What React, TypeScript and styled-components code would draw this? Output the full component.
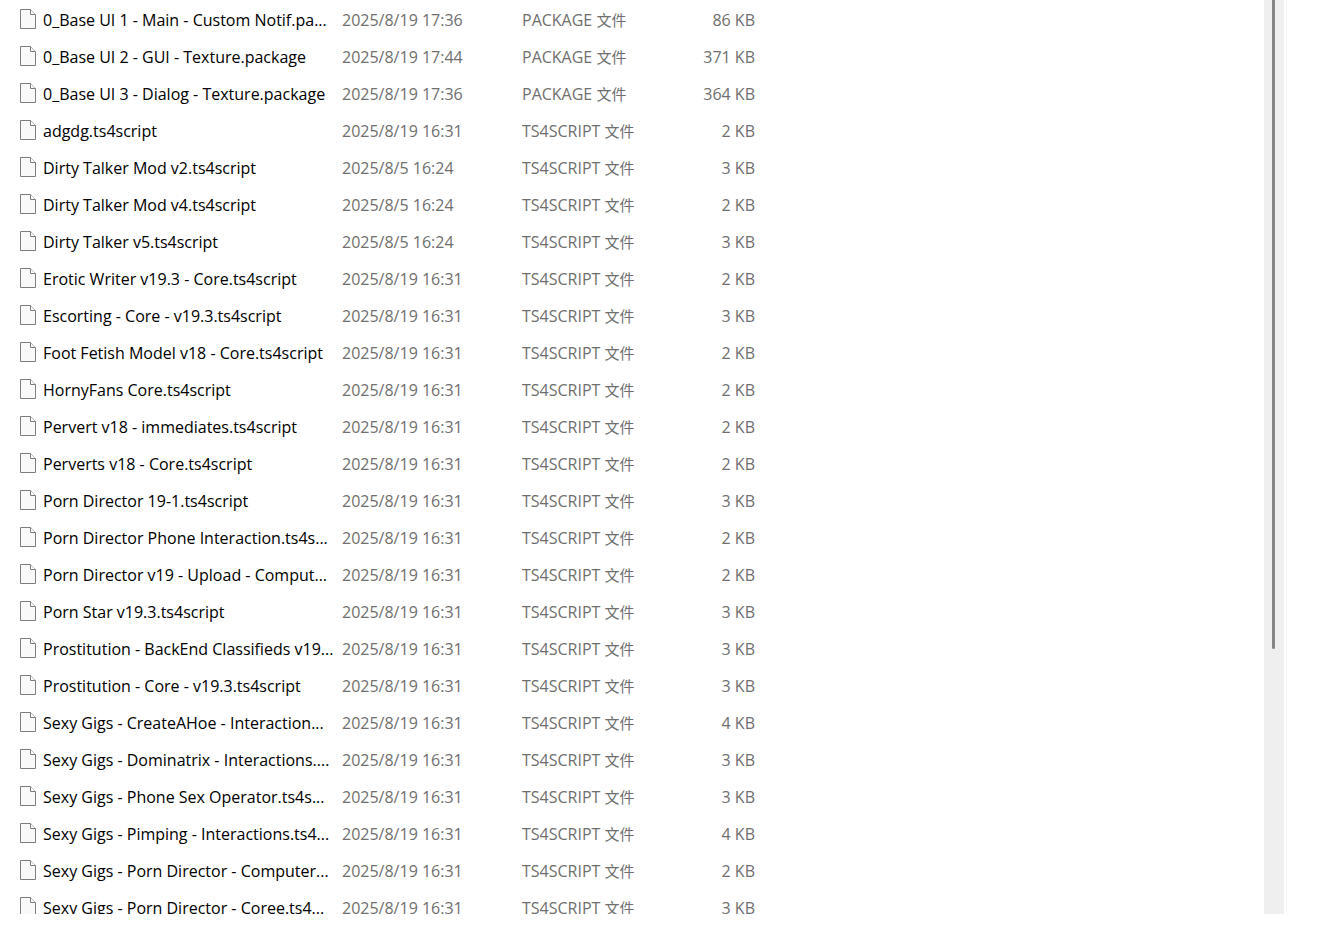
import React from "react";
import styled, { createGlobalStyle } from "styled-components";

const GlobalStyle = createGlobalStyle`
  * { box-sizing: border-box; }
  body {
    margin: 0;
    background: #fff;
    font-family: "Open Sans", "Noto Sans CJK SC", sans-serif;
    font-size: 16px;
    line-height: 20px;
  }
`;

const Pane = styled.main`
  display: flex;
  height: calc(100vh - 21px);
  padding-right: 53px;
  overflow: hidden;
`;

const ListArea = styled.div`
  flex: 1;
  min-width: 0;
  padding: 1px 0 0 20px;
  overflow: hidden;
`;

const FileTable = styled.table`
  table-layout: fixed;
  width: 735px;
  border-collapse: collapse;
`;

const Column = styled.col<{ $width: number }>`
  width: ${(p) => p.$width}px;
`;

const Row = styled.tr`
  height: 37px;
`;

const Cell = styled.td<{ $align?: "left" | "right" }>`
  padding: 0;
  color: #6f6f6f;
  text-align: ${(p) => p.$align ?? "left"};
  white-space: nowrap;
`;

const NameCell = styled(Cell)`
  color: #000;
`;

const KindSuffix = styled.span`
  font-size: 15px;
`;

const FileLabel = styled.div`
  display: flex;
  align-items: center;
  gap: 7px;
`;

const Icon = styled.svg`
  flex: none;
  width: 16px;
  height: 20px;
  margin-bottom: 2px;
`;

const Scrollbar = styled.div`
  display: flex;
  justify-content: center;
  width: 23px;
  padding-right: 1px;
  border-right: 1px solid #f5f5f5;
  background: linear-gradient(#efefef, #efefef) left / 20px 100% no-repeat;
`;

const Thumb = styled.div`
  width: 3px;
  height: 71%;
  margin-right: 2px;
  border-radius: 0 0 2px 2px;
  background: #858585;
`;

const FileIcon = () => (
  <Icon viewBox="0 0 16 20" aria-hidden="true">
    <path d="M.5.5h10l5 5v14H.5z" fill="#f9f9f9" stroke="#7d7d7d" />
    <path d="M10.5.5v5h5" fill="#fff" stroke="#7d7d7d" />
  </Icon>
);

type FileEntry = [name: string, modified: string, kind: string, size: number];

const files: FileEntry[] = [
  ["0_Base UI 1 - Main - Custom Notif.pa...", "2025/8/19 17:36", "PACKAGE", 86],
  ["0_Base UI 2 - GUI - Texture.package", "2025/8/19 17:44", "PACKAGE", 371],
  ["0_Base UI 3 - Dialog - Texture.package", "2025/8/19 17:36", "PACKAGE", 364],
  ["adgdg.ts4script", "2025/8/19 16:31", "TS4SCRIPT", 2],
  ["Dirty Talker Mod v2.ts4script", "2025/8/5 16:24", "TS4SCRIPT", 3],
  ["Dirty Talker Mod v4.ts4script", "2025/8/5 16:24", "TS4SCRIPT", 2],
  ["Dirty Talker v5.ts4script", "2025/8/5 16:24", "TS4SCRIPT", 3],
  ["Erotic Writer v19.3 - Core.ts4script", "2025/8/19 16:31", "TS4SCRIPT", 2],
  ["Escorting - Core - v19.3.ts4script", "2025/8/19 16:31", "TS4SCRIPT", 3],
  ["Foot Fetish Model v18 - Core.ts4script", "2025/8/19 16:31", "TS4SCRIPT", 2],
  ["HornyFans Core.ts4script", "2025/8/19 16:31", "TS4SCRIPT", 2],
  ["Pervert v18 - immediates.ts4script", "2025/8/19 16:31", "TS4SCRIPT", 2],
  ["Perverts v18 - Core.ts4script", "2025/8/19 16:31", "TS4SCRIPT", 2],
  ["Porn Director 19-1.ts4script", "2025/8/19 16:31", "TS4SCRIPT", 3],
  ["Porn Director Phone Interaction.ts4s...", "2025/8/19 16:31", "TS4SCRIPT", 2],
  ["Porn Director v19 - Upload - Comput...", "2025/8/19 16:31", "TS4SCRIPT", 2],
  ["Porn Star v19.3.ts4script", "2025/8/19 16:31", "TS4SCRIPT", 3],
  ["Prostitution - BackEnd Classifieds v19...", "2025/8/19 16:31", "TS4SCRIPT", 3],
  ["Prostitution - Core - v19.3.ts4script", "2025/8/19 16:31", "TS4SCRIPT", 3],
  ["Sexy Gigs - CreateAHoe - Interaction...", "2025/8/19 16:31", "TS4SCRIPT", 4],
  ["Sexy Gigs - Dominatrix - Interactions....", "2025/8/19 16:31", "TS4SCRIPT", 3],
  ["Sexy Gigs - Phone Sex Operator.ts4s...", "2025/8/19 16:31", "TS4SCRIPT", 3],
  ["Sexy Gigs - Pimping - Interactions.ts4...", "2025/8/19 16:31", "TS4SCRIPT", 4],
  ["Sexy Gigs - Porn Director - Computer...", "2025/8/19 16:31", "TS4SCRIPT", 2],
  ["Sexy Gigs - Porn Director - Coree.ts4...", "2025/8/19 16:31", "TS4SCRIPT", 3],
];

export default function App() {
  return (
    <>
      <GlobalStyle />
      <Pane>
        <ListArea>
          <FileTable>
            <colgroup>
              <Column $width={322} />
              <Column $width={180} />
              <Column $width={133} />
              <Column $width={100} />
            </colgroup>
            <tbody>
              {files.map(([name, modified, kind, size]) => (
                <Row key={name}>
                  <NameCell>
                    <FileLabel>
                      <FileIcon />
                      {name}
                    </FileLabel>
                  </NameCell>
                  <Cell>{modified}</Cell>
                  <Cell>
                    {kind} <KindSuffix>文件</KindSuffix>
                  </Cell>
                  <Cell $align="right">{size} KB</Cell>
                </Row>
              ))}
            </tbody>
          </FileTable>
        </ListArea>
        <Scrollbar>
          <Thumb />
        </Scrollbar>
      </Pane>
    </>
  );
}
